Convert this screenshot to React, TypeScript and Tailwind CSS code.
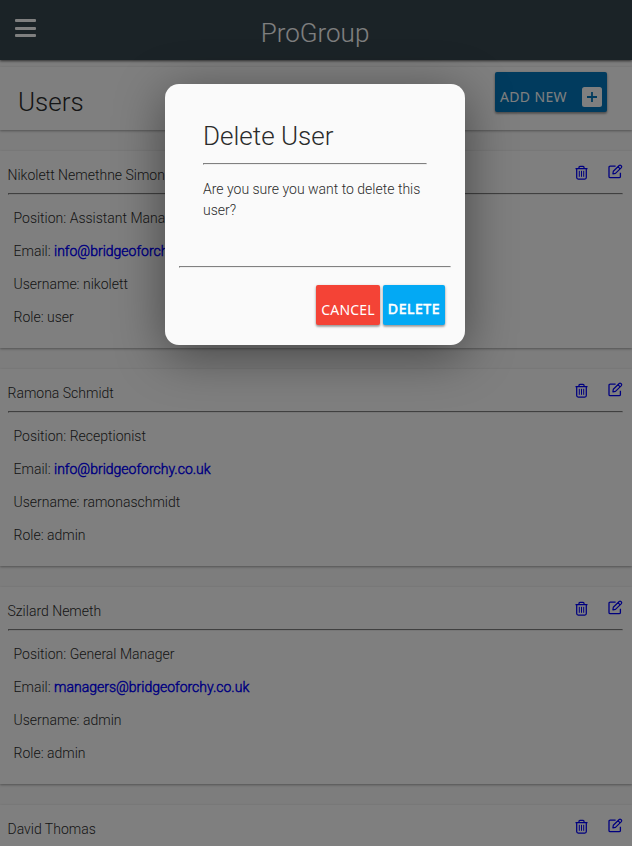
type User = { name: string; position?: string; email?: string; username?: string; role?: string };

const users: User[] = [
  { name: "Nikolett Nemethne Simon", position: "Assistant Manager", email: "info@bridgeoforchy.co.uk", username: "nikolett", role: "user" },
  { name: "Ramona Schmidt", position: "Receptionist", email: "info@bridgeoforchy.co.uk", username: "ramonaschmidt", role: "admin" },
  { name: "Szilard Nemeth", position: "General Manager", email: "managers@bridgeoforchy.co.uk", username: "admin", role: "admin" },
  { name: "David Thomas" },
];

const cardShadow = "shadow-[0_1px_3px_rgba(0,0,0,0.12),0_1px_2px_rgba(0,0,0,0.24)]";
const buttonShadow = "shadow-[0_1px_3px_rgba(0,0,0,0.3),0_2px_2px_rgba(0,0,0,0.2)]";

function TrashIcon() {
  return (
    <svg width="13" height="15" viewBox="0 0 13 15" fill="none" stroke="currentColor" strokeWidth="1.25">
      <path d="M0.5 3.5h12M4 3.2V2.3Q4 1.4 4.9 1.4h3.2Q9 1.4 9 2.3v0.9" />
      <path d="M1.7 3.5v9Q1.7 14 3.2 14h6.6Q11.3 14 11.3 12.5v-9" />
      <path d="M4.3 5.8v6M6.5 5.8v6M8.7 5.8v6" strokeWidth="1" />
    </svg>
  );
}

function EditIcon() {
  return (
    <svg width="15" height="15" viewBox="0 0 15 15" fill="none" stroke="currentColor" strokeWidth="1.3" strokeLinejoin="round">
      <path d="M7.6 2.2H2.2Q1 2.2 1 3.4v9Q1 13.7 2.2 13.7h8.9Q12.4 13.7 12.4 12.4V8.8" />
      <path d="M4.9 9.9l0.4-2.6 5.9-5.8Q12 0.8 12.8 1.4l0.6 0.6Q14.1 2.8 13.4 3.6L7.5 9.4z M10 2.7l2.1 2.1" strokeWidth="1.2" />
    </svg>
  );
}

function PlusSquareIcon() {
  return (
    <svg width="20" height="20" viewBox="0 0 20 20">
      <rect width="20" height="20" rx="2.5" fill="#fff" />
      <path d="M10 5v10M5 10h10" stroke="#0277bd" strokeWidth="1.8" />
    </svg>
  );
}

function Rule() {
  return <hr className="h-[2px] border border-t-[#808080] border-l-[#808080] border-r-[#eeeeee] border-b-[#eeeeee]" />;
}

function UserCard({ user }: { user: User }) {
  return (
    <section className={`h-[197px] shrink-0 bg-white pl-[7.5px] pr-[9px] pt-[10px] ${cardShadow}`}>
      <div className="flex h-[32px] justify-between">
        <h2 className="pt-[4px] leading-[21px]">{user.name}</h2>
        <div className="flex gap-[20px] text-[#0000ff]">
          <div className="pt-[4px]"><TrashIcon /></div>
          <div className="pt-[3px]"><EditIcon /></div>
        </div>
      </div>
      <Rule />
      {user.position && (
        <div className="flex flex-col gap-3 px-1.5 pt-[13px] leading-[21px]">
          <p>Position: {user.position}</p>
          <p>Email: <a className="text-[#0000ff] [-webkit-text-stroke:0.45px_#0000ff]">{user.email}</a></p>
          <p>Username: {user.username}</p>
          <p>Role: {user.role}</p>
        </div>
      )}
    </section>
  );
}

export default function App() {
  return (
    <div className="relative h-[846px] w-[632px] overflow-hidden bg-[#fafafa] font-['Roboto',sans-serif] text-[14px] font-light text-[#2b2b2b]">
      <header className="relative flex h-[60px] items-center justify-center bg-[#37474f] text-white shadow-[0_1px_3px_rgba(0,0,0,0.3),0_1px_2px_rgba(0,0,0,0.4)]">
        <div className="absolute left-[15px] top-[19px] flex flex-col gap-[4.5px]">
          <span className="h-[3px] w-[21px] rounded-[1px] bg-white" />
          <span className="h-[3px] w-[21px] rounded-[1px] bg-white" />
          <span className="h-[3px] w-[21px] rounded-[1px] bg-white" />
        </div>
        <h1 className="pt-[6px] pr-[2px] text-[26px] leading-[30px]">ProGroup</h1>
      </header>
      <section className={`mt-[7px] flex h-[63px] justify-between bg-white pl-[18px] pr-[25px] ${cardShadow}`}>
        <h1 className="pt-[20px] text-[26px] leading-[30px]">Users</h1>
        <button className={`mt-[5px] flex h-[40px] w-[112px] items-center justify-between rounded-[2px] bg-[#0277bd] px-[5px] pt-[10px] font-['Noto_Sans',sans-serif] text-[14px] font-normal tracking-[0.35px] text-white ${buttonShadow}`}>
          <span className="pb-[2px]">ADD NEW</span>
          <PlusSquareIcon />
        </button>
      </section>
      <main className="mt-[21px] flex flex-col gap-[21px]">
        {users.map((u) => <UserCard key={u.name} user={u} />)}
      </main>
      <div className="absolute inset-0 flex items-start justify-center bg-black/50 pr-[2px] pt-[84px]">
        <div role="dialog" className="h-[261px] w-[300px] rounded-[14px] bg-[#fafafa] px-[14px] shadow-[0_10px_50px_rgba(0,0,0,0.45)]">
          <div className="h-[182px] px-6 pt-[37px]">
            <h2 className="pb-[12px] text-[26px] leading-[30px]">Delete User</h2>
            <Rule />
            <p className="pt-[14px] leading-[21px]">Are you sure you want to delete this user?</p>
          </div>
          <Rule />
          <div className="flex justify-end gap-[3px] pr-[6px] pt-[17px] font-['Noto_Sans',sans-serif] text-[14px] font-normal text-white">
            <button className={`h-[40px] w-[64px] rounded-[2px] bg-[#f44336] pt-[8px] tracking-[0.2px] ${buttonShadow}`}>CANCEL</button>
            <button className={`h-[40px] w-[62px] rounded-[2px] bg-[#03a9f4] pt-[7px] tracking-[0.6px] [-webkit-text-stroke:0.6px_#fff] ${buttonShadow}`}>DELETE</button>
          </div>
        </div>
      </div>
    </div>
  );
}
